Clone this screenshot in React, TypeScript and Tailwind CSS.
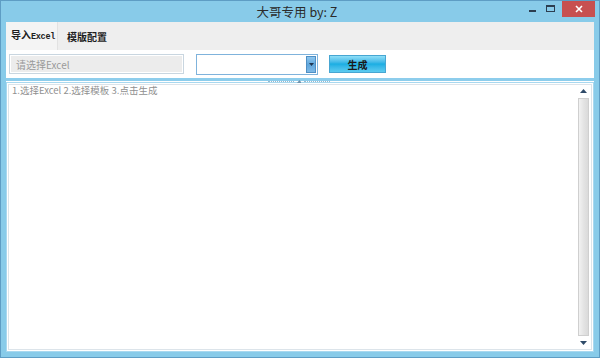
import React from "react";

const cjk = { fontFamily: '"Microsoft YaHei", "Noto Sans CJK SC", "Noto Sans", sans-serif' };
const mono = { fontFamily: '"Liberation Mono", "Noto Sans CJK SC", monospace' };

const App = () => {
  return (
    <div
      className="w-[600px] h-[358px] bg-[#88CBE9] border border-[#5E9DC4] flex flex-col overflow-hidden"
      style={cjk}
    >
      {/* ===== title bar ===== */}
      <div className="relative h-[21px] shrink-0 flex items-center justify-center">
        <span className="text-[12.5px] text-[#2b2b2b] leading-none ml-[-6px] mt-[2px]">大哥专用 by: Z</span>

        <div className="absolute right-[4px] top-[-1px] flex items-start">
          {/* minimize */}
          <div className="w-[18px] h-[16px] flex items-center justify-center">
            <div className="w-[7px] h-[2px] bg-[#2c3e50] mt-[5px]" />
          </div>
          {/* maximize */}
          <div className="w-[18px] h-[16px] flex items-center justify-center mr-[3px]">
            <div className="w-[9px] h-[7px] border border-[#2c3e50] border-t-2" />
          </div>
          {/* close */}
          <div className="w-[33px] h-[17px] bg-[#C75050] flex items-center justify-center">
            <svg width="8" height="8" viewBox="0 0 8 8">
              <path d="M1 1 L7 7 M7 1 L1 7" stroke="#fff" strokeWidth="1.6" />
            </svg>
          </div>
        </div>
      </div>

      {/* ===== client area ===== */}
      <div className="flex-1 mx-[5px] mb-[5px] flex flex-col bg-white">
        {/* tabs */}
        <div className="h-[28px] shrink-0 bg-[#EEEEEE] flex items-stretch">
          <div className="w-[52px] bg-[#F4F4F4] border-r border-[#E2E2E2] flex items-center pl-[5px] text-[10px] font-bold text-[#1e1e1e]">
            <span className="leading-none">
              导入<span className="font-bold text-[8.5px] tracking-[-0.3px]" style={mono}>Excel</span>
            </span>
          </div>
          <div className="flex items-center pl-[9px] text-[10px] font-bold text-[#1e1e1e]">模版配置</div>
        </div>

        {/* toolbar */}
        <div className="h-[28px] shrink-0 flex items-center pl-[3px]">
          <div className="w-[175px] h-[20px] border border-[#C9D6E0] p-[1px] bg-white">
            <div className="w-full h-full bg-[#ECECEC] flex items-center pl-[5px] text-[10px] text-[#9a9a9a]">
              请选择Excel
            </div>
          </div>

          <div className="ml-[12px] w-[122px] h-[21px] border border-[#7FB3DC] bg-white flex justify-end items-stretch p-[1px]">
            <div className="w-[10px] bg-gradient-to-b from-[#8EC6EE] via-[#5FA6DC] to-[#7CB8E6] border border-[#4F8FC4] flex items-center justify-center">
              <svg width="5" height="3" viewBox="0 0 5 3">
                <path d="M0 0 L5 0 L2.5 3 Z" fill="#1f3550" />
              </svg>
            </div>
          </div>

          <div className="ml-[11px] w-[57px] h-[18px] border border-[#47A6D2] bg-gradient-to-b from-[#8EDFF8] via-[#19AEE3] to-[#5BCBF0] flex items-center justify-center text-[10px] font-bold text-[#1a1a1a]">
            生成
          </div>
        </div>

        {/* splitter */}
        <div className="relative h-[3px] shrink-0 bg-[#8DCDEC]">
          <div className="absolute left-[262px] top-[2px] w-[62px] flex items-center justify-center gap-[3px]">
            <div className="w-[26px] border-t border-dotted border-[#9BB8CC]" />
            <svg width="5" height="3" viewBox="0 0 5 3">
              <path d="M0 3 L5 3 L2.5 0 Z" fill="#6F93AE" />
            </svg>
            <div className="w-[26px] border-t border-dotted border-[#9BB8CC]" />
          </div>
        </div>

        {/* text area */}
        <div className="flex-1 border border-[#A8D8EF] bg-white p-[1px] mt-[1px]">
          <div className="h-full border border-[#DCE4EA] flex">
            <div className="flex-1 pl-[3px] pt-[1px] text-[9.5px] text-[#909090] leading-none">
              1.选择Excel 2.选择模板 3.点击生成
            </div>

            {/* scrollbar */}
            <div className="w-[14px] mr-[1px] flex flex-col items-center">
              <div className="h-[12px] flex items-center justify-center">
                <svg width="7" height="4" viewBox="0 0 7 4">
                  <path d="M0 4 L7 4 L3.5 0 Z" fill="#2E4A68" />
                </svg>
              </div>
              <div className="flex-1 w-[11px] my-[1px] border border-[#CFCFCF] bg-gradient-to-r from-[#F2F2F2] via-[#E4E4E4] to-[#DADADA]" />
              <div className="h-[12px] flex items-center justify-center">
                <svg width="7" height="4" viewBox="0 0 7 4">
                  <path d="M0 0 L7 0 L3.5 4 Z" fill="#2E4A68" />
                </svg>
              </div>
            </div>
          </div>
        </div>
      </div>
    </div>
  );
};

export default App;
